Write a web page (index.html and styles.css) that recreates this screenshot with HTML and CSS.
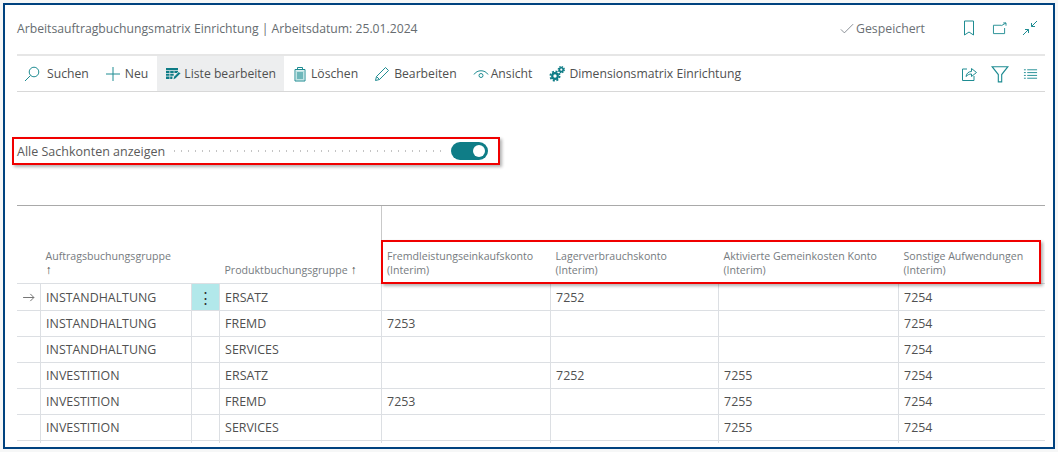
FILE: index.html
```html
<!DOCTYPE html>
<html lang="de">
<head>
<meta charset="utf-8">
<title>Arbeitsauftragbuchungsmatrix Einrichtung</title>
<link rel="stylesheet" href="styles.css">
</head>
<body>
<main class="frame">
  <header class="titlebar">
    <h1 class="title">Arbeitsauftragbuchungsmatrix Einrichtung | Arbeitsdatum: 25.01.2024</h1>
    <span class="saved"><svg class="ico-check" viewBox="0 0 16 12"><path d="M1 7l4 4L15 1"/></svg>Gespeichert</span>
    <svg class="ico ico-bookmark" viewBox="0 0 12 16"><path d="M1.500 1h9v14L6 12l-4.500 3z"/></svg>
    <svg class="ico ico-open" viewBox="0 0 16 14"><path d="M10 3.500H1.500v9h12V6.500M10 4L15 1M12 1h3v3"/></svg>
    <svg class="ico ico-collapse" viewBox="0 0 16 16"><path d="M15 1L9.500 6.500M9.500 3v3.500H13M1 15l5.500-5.500M3 9.500h3.500V13"/></svg>
  </header>
  <nav class="toolbar">
    <button class="tool tool-first"><svg class="ico" viewBox="0 0 16 16"><circle cx="10" cy="6" r="4.800"/><path d="M6.500 9.500L1 15"/></svg>Suchen</button>
    <button class="tool"><svg class="ico" viewBox="0 0 16 16"><path d="M8 1v14M1 8h14"/></svg>Neu</button>
    <button class="tool active"><svg class="ico ico-solid" viewBox="0 0 16 16"><path d="M1 2h12v2.200H1zM1 5h3.500v2H1zM5.200 5h3.500v2H5.200zM9.400 5h3.600v1.500l-1 .5H9.400zM1 7.800h3.500v2H1zM5.200 7.800h3.500v2H5.200zM1 10.600h3.500v2.400H1zM5.200 10.600h2.300v2.400H5.200z"/><path class="thin" d="M7.800 14l.8-3.200 5.200-5.300 2 2-5.200 5.300z"/></svg>Liste bearbeiten</button>
    <button class="tool tool-tight"><svg class="ico" viewBox="0 0 16 16"><path class="tint" d="M4 4.500h8v10H4z"/><path d="M3 3.500h10V15H3zM5.500 3.500V1.500h5v2M6 6v7M8 6v7M10 6v7"/></svg>Löschen</button>
    <button class="tool"><svg class="ico" viewBox="0 0 16 16"><path d="M1.500 14.500l1-4L11.500 1.500l3 3-9 9zM2.500 10.500l3 3"/></svg>Bearbeiten</button>
    <button class="tool tool-view"><svg class="ico" viewBox="0 0 16 12"><path d="M1 6.500C4 1.500 12 1.500 15 6.500"/><circle cx="8" cy="7.500" r="2"/></svg>Ansicht</button>
    <button class="tool"><svg class="ico ico-gears" viewBox="0 0 16 16"><circle class="g-body" cx="6" cy="10" r="2.800"/><circle class="g-teeth" cx="6" cy="10" r="4.600"/><circle class="g-body-s" cx="12.300" cy="3.700" r="1.900"/><circle class="g-teeth-s" cx="12.300" cy="3.700" r="3"/></svg>Dimensionsmatrix Einrichtung</button>
    <span class="tool-end">
      <svg class="ico" viewBox="0 0 16 16"><path d="M6 3H1.500v11.500H13V10M5 10.500C5.500 7 8 5.500 10.500 5.500V2.500L15.500 6.500 10.500 10.500V8C8 8 6.500 9 5 10.500z"/></svg>
      <svg class="ico ico-filter" viewBox="0 0 16 16"><path d="M1 1.500h14L9.500 8.500v6.500h-3V8.500z"/></svg>
      <svg class="ico ico-list" viewBox="0 0 16 12"><path d="M1 1.500h2M4.500 1.500H15M1 4.500h2M4.500 4.500H15M1 7.500h2M4.500 7.500H15M1 10.500h2M4.500 10.500H15"/></svg>
    </span>
  </nav>
  <section class="field">
    <div class="field-box">
      <span class="field-label">Alle Sachkonten anzeigen</span>
      <span class="dots"></span>
      <span class="switch"><span class="knob"></span></span>
    </div>
  </section>
  <section class="grid-wrap">
    <span class="highlight"></span>
    <table class="grid">
      <colgroup><col class="c-arrow"><col class="c-job"><col class="c-menu"><col class="c-prod"><col class="c-a"><col class="c-b"><col class="c-c"><col class="c-d"></colgroup>
      <thead>
        <tr>
          <th></th>
          <th>Auftragsbuchungsgruppe<br><span class="sort">↑</span></th>
          <th></th>
          <th>Produktbuchungsgruppe <span class="sort">↑</span></th>
          <th class="h-sep">Fremdleistungseinkaufskonto<br>(Interim)</th>
          <th>Lagerverbrauchskonto<br>(Interim)</th>
          <th>Aktivierte Gemeinkosten Konto<br>(Interim)</th>
          <th>Sonstige Aufwendungen<br>(Interim)</th>
        </tr>
      </thead>
      <tbody>
        <tr class="first"><td class="arrow"><svg viewBox="0 0 14 10"><path d="M1 5h12M9 1l4 4-4 4"/></svg></td><td>INSTANDHALTUNG</td><td class="menu">⋮</td><td>ERSATZ</td><td></td><td>7252</td><td></td><td>7254</td></tr>
        <tr><td></td><td>INSTANDHALTUNG</td><td></td><td>FREMD</td><td>7253</td><td></td><td></td><td>7254</td></tr>
        <tr><td></td><td>INSTANDHALTUNG</td><td></td><td>SERVICES</td><td></td><td></td><td></td><td>7254</td></tr>
        <tr><td></td><td>INVESTITION</td><td></td><td>ERSATZ</td><td></td><td>7252</td><td>7255</td><td>7254</td></tr>
        <tr><td></td><td>INVESTITION</td><td></td><td>FREMD</td><td>7253</td><td></td><td>7255</td><td>7254</td></tr>
        <tr><td></td><td>INVESTITION</td><td></td><td>SERVICES</td><td></td><td></td><td>7255</td><td>7254</td></tr>
        <tr class="cut"><td></td><td></td><td></td><td></td><td></td><td></td><td></td><td></td></tr>
      </tbody>
    </table>
  </section>
</main>
</body>
</html>
```
FILE: styles.css
```css
* { box-sizing: border-box; }
html, body { margin: 0; height: 100%; background: #f6f7f7; }
body { padding: 3px; font-family: "Open Sans", "Noto Sans", sans-serif; color: #505050; overflow: hidden; }
.frame { width: 1052px; height: 446px; background: #fff; border: 2px solid #00427f; padding: 0 8px 0 12px; overflow: hidden; }
.titlebar { height: 51px; padding-bottom: 3px; display: flex; align-items: center; border-bottom: 2px solid #e6e6e6; }
.title { flex: 1; margin: 0; font-size: 12.2px; font-weight: 400; color: #666c70; }
.saved { display: flex; align-items: center; font-size: 12.3px; color: #6b7075; margin-right: 38px; }
.ico-check { width: 14px; height: 11px; margin-right: 2px; fill: none; stroke: #7a8088; stroke-width: 1; }
.ico { width: 16px; height: 16px; fill: none; stroke: #1f8c92; stroke-width: 1; flex: none; }
.ico-bookmark { width: 12px; height: 16px; margin-right: 17px; }
.ico-open { width: 15px; height: 13px; margin-right: 15px; }
.ico-collapse { width: 16px; height: 16px; margin-right: 7px; }
.toolbar { height: 36px; display: flex; align-items: stretch; border-bottom: 1px solid #d8d8d8; }
.tool { display: flex; align-items: center; gap: 4px; padding: 0 8px; border: 0; background: none; font: inherit; font-size: 12.2px; color: #505050; }
.tool-first { gap: 7px; padding-left: 7px; }
.tool-tight { gap: 3px; }
.tool-view { gap: 2px; padding-right: 9px; }
.tool.active { background: #edeeef; gap: 3px; margin-left: 1px; }
.ico-solid { fill: #0e7c86; stroke: none; }
.ico .thin { fill: #0e7c86; stroke: #fff; stroke-width: .8; }
.ico .tint { fill: #bfe3e3; stroke: none; }
.ico-gears { stroke: #0e7c86; }
.g-body { stroke-width: 2.200; }
.g-teeth { stroke-width: 1.800; stroke-dasharray: 2 1.610; }
.g-body-s { stroke-width: 1.600; }
.g-teeth-s { stroke-width: 1.300; stroke-dasharray: 1.400 .955; }
.tool-end { margin-left: auto; display: flex; align-items: center; gap: 14px; padding-right: 7px; }
.ico-filter { width: 18px; height: 18px; }
.ico-list { width: 15px; height: 12px; }
.field { height: 113px; padding-top: 45px; margin-left: -5px; }
.field-box { width: 488px; height: 28px; display: flex; align-items: center; gap: 6px; padding: 0 10px 0 3px; border: 2px solid #f00000; box-shadow: 2px 2px 3px rgba(0,0,0,.3); background: #fff; }
.field-label { font-size: 12.5px; color: #5a5a5a; }
.dots { flex: 1; height: 2px; background-image: radial-gradient(circle, #c4c4c4 .6px, transparent .9px); background-size: 7px 2px; }
.switch { width: 37px; height: 18px; border-radius: 9px; background: #0f7d87; display: flex; align-items: center; justify-content: flex-end; padding-right: 3px; }
.knob { width: 12px; height: 12px; border-radius: 50%; background: #fff; }
.grid-wrap { position: relative; height: 238px; overflow: hidden; border-top: 1px solid #a9a9a9; }
.highlight { position: absolute; left: 364px; top: 34px; width: 660px; height: 44px; border: 2px solid #f00000; box-shadow: 2px 2px 3px rgba(0,0,0,.3); z-index: 1; pointer-events: none; }
.grid { width: 1028px; table-layout: fixed; border-collapse: collapse; }
.c-arrow { width: 23px; } .c-job { width: 151px; } .c-menu { width: 28px; } .c-prod { width: 162px; }
.c-a { width: 169px; } .c-b { width: 168px; } .c-c { width: 180px; } .c-d { width: 147px; }
th { height: 77px; padding: 0 5px 6px 5.500px; vertical-align: bottom; text-align: left; font-size: 10.6px; line-height: 14px; font-weight: 400; color: #767b80; white-space: nowrap; }
.sort { font-size: 12px; color: #444; }
.h-sep { border-left: 1px solid #c9c9c9; }
td { height: 26px; padding: 0 5px 0 5.600px; border: 1px solid #dcdfe3; border-top: 0; font-size: 12.4px; color: #505050; white-space: nowrap; overflow: hidden; }
.first td { height: 27px; padding-top: 1px; }
thead tr { border-bottom: 1px solid #dcdfe3; }
td:first-child { border-left: 0; }
td:last-child { border-right: 0; }
td.arrow { padding: 1px 0 0 5px; }
.arrow svg { display: block; width: 13px; height: 9px; fill: none; stroke: #666; stroke-width: 1; }
td.menu { background: #b2e8ea; text-align: center; padding: 0; font-size: 15px; color: #333; }
.cut td { border-bottom: 0; }
```
